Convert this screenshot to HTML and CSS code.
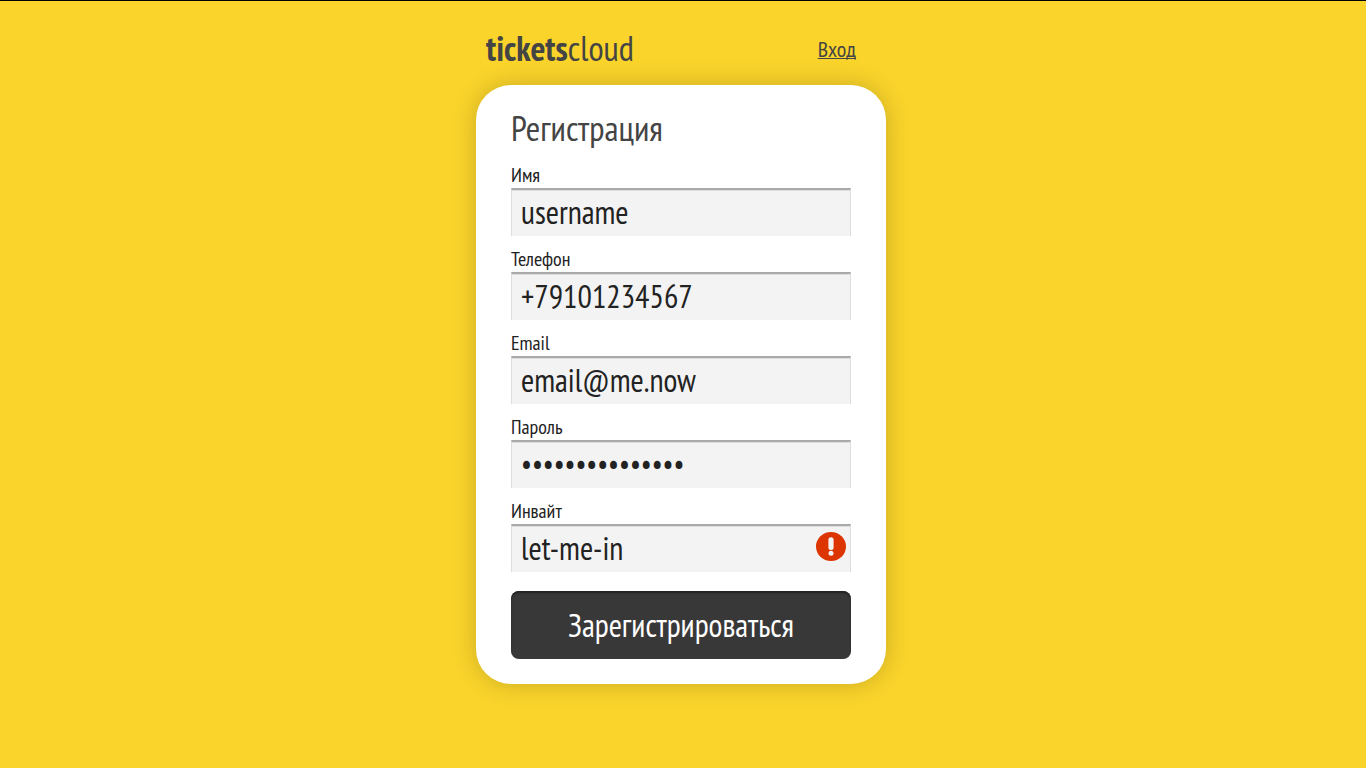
FILE: index.html
```html
<!DOCTYPE html>
<html lang="ru">
<head>
  <meta charset="utf-8">
  <meta name="viewport" content="width=device-width, initial-scale=1">
  <title>ticketscloud — Регистрация</title>
  <link rel="stylesheet" href="styles.css">
</head>
<body>
  <div class="page">
    <header class="header">
      <div class="logo"><strong>tickets</strong>cloud</div>
      <a class="login" href="#">Вход</a>
    </header>
    <main class="card">
      <h1 class="title">Регистрация</h1>
      <form class="form">
        <div class="field">
          <label class="label" for="name">Имя</label>
          <input class="input" id="name" type="text" value="username">
        </div>
        <div class="field">
          <label class="label" for="phone">Телефон</label>
          <input class="input" id="phone" type="tel" value="+79101234567">
        </div>
        <div class="field">
          <label class="label" for="email">Email</label>
          <input class="input" id="email" type="email" value="email@me.now">
        </div>
        <div class="field">
          <label class="label" for="password">Пароль</label>
          <input class="input password" id="password" type="password" value="passwordpasswor">
        </div>
        <div class="field">
          <label class="label" for="invite">Инвайт</label>
          <input class="input" id="invite" type="text" value="let-me-in">
          <svg class="error" viewBox="0 0 30 30" aria-hidden="true">
            <ellipse cx="15" cy="14.5" rx="15" ry="14.5" fill="#dc3500"/>
            <rect x="12.4" y="5.3" width="5.2" height="12.7" rx="2.5" fill="#f3f3f3"/>
            <circle cx="15" cy="21.2" r="2.5" fill="#f3f3f3"/>
          </svg>
        </div>
        <button class="submit" type="submit">Зарегистрироваться</button>
      </form>
    </main>
  </div>
</body>
</html>
```
FILE: styles.css
```css
* {
  box-sizing: border-box;
}

body {
  margin: 0;
  min-height: 100vh;
  border-top: 1px solid #000;
  background: #fad42b;
  color: #222;
  font-family: "PT Sans Narrow", "Liberation Sans Narrow", "Open Sans Condensed", "Roboto Condensed", "Liberation Sans", sans-serif;
}

.page {
  max-width: 414px;
  margin: 0 auto;
  padding: 24px 4px 24px 0;
}

.header {
  display: flex;
  justify-content: space-between;
  align-items: center;
  height: 48px;
  margin-bottom: 12px;
  padding: 0 30px 0 10px;
  color: #444;
}

.logo {
  padding-bottom: 2px;
  font-size: 35px;
}

.login {
  color: #444;
  font-size: 22px;
  text-decoration-thickness: 1px;
  text-decoration-skip-ink: none;
}

.card {
  padding: 20px 35px 25px;
  border-radius: 35px;
  background: #fff;
  box-shadow: 0 0 24px rgba(0, 0, 0, 0.2);
}

.title {
  margin: 0 0 13px;
  color: #444;
  font-size: 35px;
  font-weight: 400;
  line-height: 46px;
}

.field {
  position: relative;
  margin-bottom: 12px;
}

.label {
  display: block;
  padding-bottom: 2px;
  font-size: 20px;
  line-height: 22px;
}

.input {
  display: block;
  width: 100%;
  height: 48px;
  padding: 0 9px 2px;
  border: 1px solid #ddd;
  border-top: 2px solid #aaa;
  border-bottom: 0;
  border-radius: 0;
  outline: 0;
  background: #f3f3f3;
  box-shadow: inset 0 1px 0 #ddd;
  color: #222;
  font-family: inherit;
  font-size: 32px;
}

.password {
  padding-bottom: 6px;
  font-size: 30px;
}

.error {
  position: absolute;
  right: 5px;
  bottom: 10px;
  width: 30px;
  height: 30px;
}

.submit {
  display: block;
  width: 100%;
  height: 68px;
  margin-top: 19px;
  padding: 0;
  border: 0;
  border-radius: 8px;
  background: #383838;
  box-shadow: inset 0 2px 2px #222;
  color: #fff;
  font-family: inherit;
  font-size: 32px;
}
```
